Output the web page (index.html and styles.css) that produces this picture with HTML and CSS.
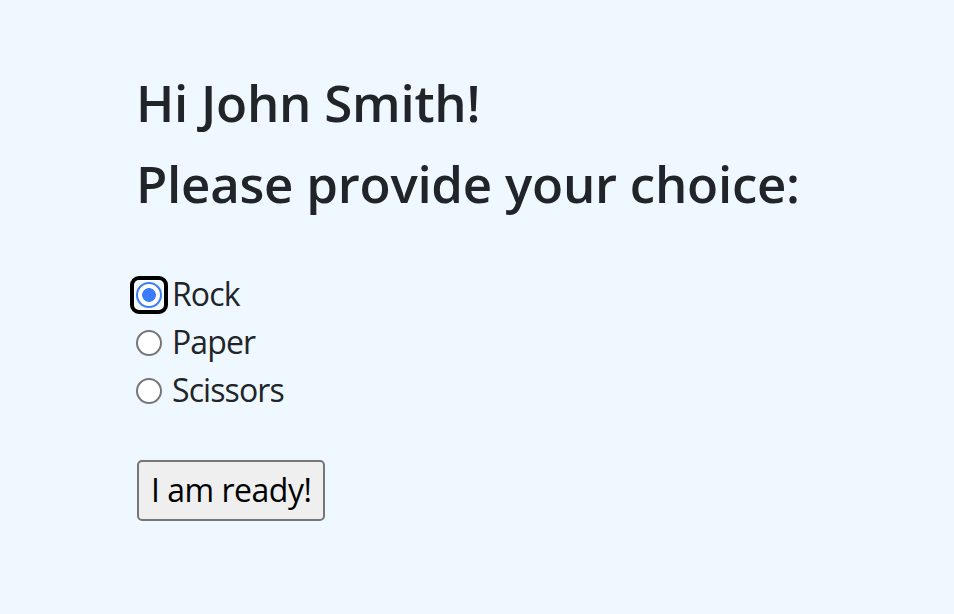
FILE: index.html
```html
<!DOCTYPE html>
<html lang="en">
<head>
<meta charset="utf-8">
<title>Rock Paper Scissors</title>
<link rel="stylesheet" href="styles.css">
</head>
<body>
<main class="page">
  <h2 class="title">Hi John Smith!</h2>
  <h2 class="title">Please provide your choice:</h2>
  <form class="choices">
    <label class="option"><span class="radio-wrap focused"><input type="radio" name="choice" value="rock" checked></span>Rock</label>
    <label class="option"><span class="radio-wrap"><input type="radio" name="choice" value="paper"></span>Paper</label>
    <label class="option"><span class="radio-wrap"><input type="radio" name="choice" value="scissors"></span>Scissors</label>
    <div class="actions"><button type="button" class="ready">I am ready!</button></div>
  </form>
</main>
</body>
</html>
```

FILE: styles.css
```css
html, body {
  margin: 0;
  padding: 0;
}
body {
  background: #f0f8ff;
  color: #212529;
  font-family: "Open Sans", "Noto Sans", sans-serif;
  min-height: 614px;
}
.page {
  padding: 72px 0 0 136px;
}
.title {
  margin: 0 0 20px;
  font-size: 51px;
  line-height: 61px;
  font-weight: 600;
  letter-spacing: -0.25px;
}
.title + .title {
  margin-bottom: 0;
}
.choices {
  margin-top: 56px;
  display: flex;
  flex-direction: column;
  align-items: flex-start;
}
.option {
  display: flex;
  align-items: center;
  font-size: 32px;
  line-height: 48px;
  height: 48px;
  letter-spacing: -0.9px;
}
.radio-wrap {
  position: relative;
  display: inline-flex;
  margin-right: 10px;
  top: 1px;
}
.radio-wrap input {
  appearance: none;
  -webkit-appearance: none;
  margin: 0;
  width: 26px;
  height: 26px;
  border: 2.5px solid #767676;
  border-radius: 50%;
  background: #fff;
  box-sizing: border-box;
}
.radio-wrap input:checked {
  border-color: #3b7cf8;
  background: radial-gradient(circle, #3b7cf8 0 6.5px, #fff 7.2px);
}
.radio-wrap.focused::after {
  content: "";
  position: absolute;
  inset: -6px;
  border: 4px solid #000;
  border-radius: 9px;
  box-shadow: inset 0 0 0 1.5px #fff;
  pointer-events: none;
}
.actions {
  margin-top: 46px;
}
.ready {
  font-family: inherit;
  font-size: 32px;
  line-height: 48px;
  letter-spacing: -0.5px;
  color: #000;
  background: #efefef;
  border: 2px solid #767676;
  border-radius: 5px;
  padding: 4px 12px 5px;
  margin: 0 0 0 1px;
}
```
